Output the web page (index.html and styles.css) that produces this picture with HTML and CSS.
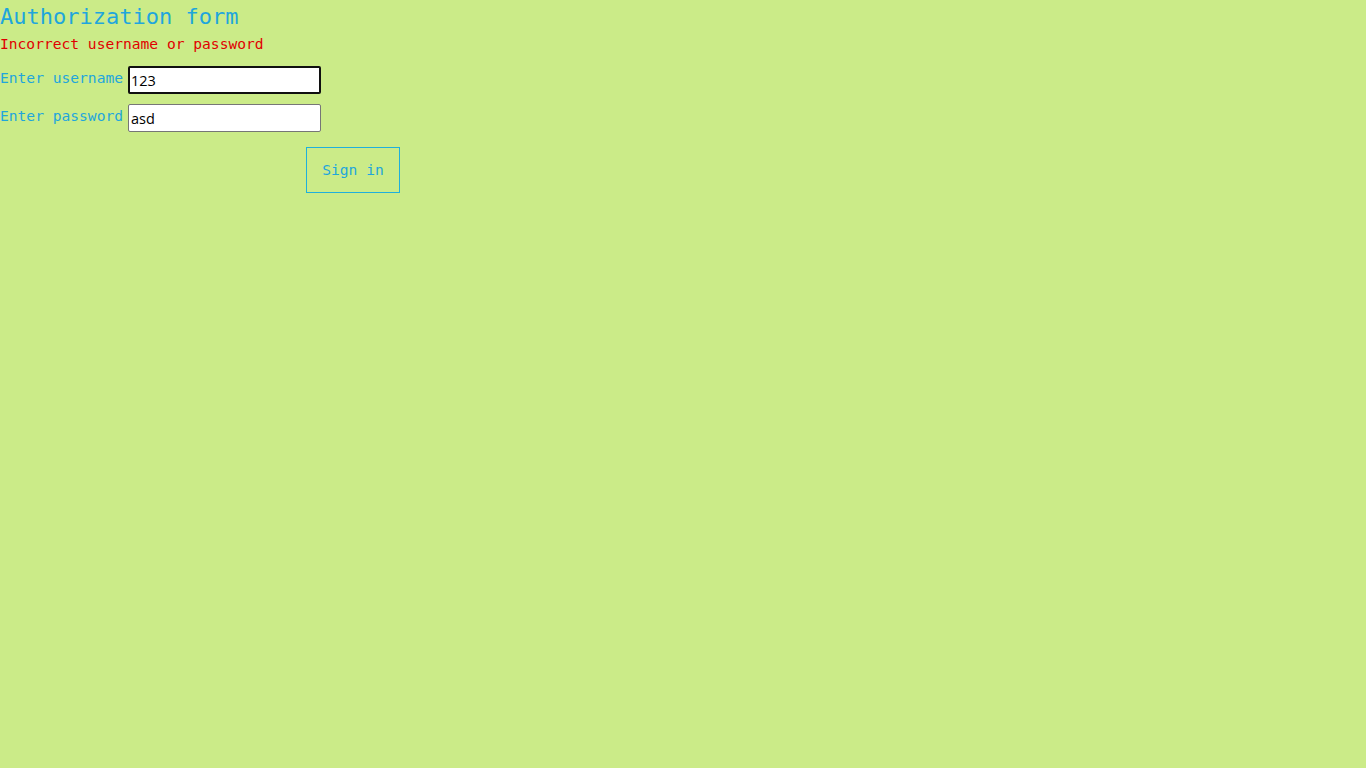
FILE: index.html
```html
<!DOCTYPE html>
<html lang="en">
<head>
<meta charset="utf-8">
<title>Authorization form</title>
<link rel="stylesheet" href="styles.css">
</head>
<body>
<h1 class="title">Authorization form</h1>
<p class="error">Incorrect username or password</p>
<form class="form">
  <div class="row">
    <label class="label" for="u">Enter username</label>
    <input class="field field--focused" id="u" type="text" value="123">
  </div>
  <div class="row">
    <label class="label" for="p">Enter password</label>
    <input class="field" id="p" type="text" value="asd">
  </div>
  <div class="actions">
    <button class="btn" type="submit">Sign in</button>
  </div>
</form>
</body>
</html>
```
FILE: styles.css
```css
html, body {
  margin: 0;
  padding: 0;
  background: #cbeb88;
  font-family: "DejaVu Sans Mono", "Liberation Mono", monospace;
}
.title {
  margin: 0;
  padding-top: 3px;
  font-size: 22px;
  font-weight: normal;
  line-height: 27px;
  color: #1fa6dc;
}
.error {
  margin: 0;
  padding-top: 3px;
  padding-bottom: 1px;
  font-size: 14.6px;
  line-height: 22px;
  color: #e00000;
}
.form {
  margin-top: 10px;
  display: flex;
  flex-direction: column;
  gap: 10px;
}
.row {
  display: flex;
  align-items: center;
  gap: 5px;
  height: 28px;
}
.label {
  font-size: 14.6px;
  color: #1fa6dc;
  line-height: 20px;
  margin-top: -4px;
  width: 123px;
}
.field {
  box-sizing: border-box;
  width: 193px;
  height: 28px;
  margin: 0;
  padding: 1px 2px 0;
  border: 1px solid #767676;
  border-radius: 2px;
  background: #fff;
  font-family: "Open Sans", "Noto Sans", sans-serif;
  font-size: 14.5px;
  color: #000;
  outline: none;
}
.field--focused {
  border: 2px solid #101010;
  padding-left: 1px;
}
.actions {
  padding-left: 306px;
  padding-top: 5px;
}
.btn {
  box-sizing: border-box;
  width: 94px;
  height: 46px;
  margin: 0;
  padding: 0 0 2px;
  background: transparent;
  border: 1px solid #1fb0dc;
  color: #1fa6dc;
  font-family: "DejaVu Sans Mono", "Liberation Mono", monospace;
  font-size: 14.6px;
  cursor: pointer;
}
```
